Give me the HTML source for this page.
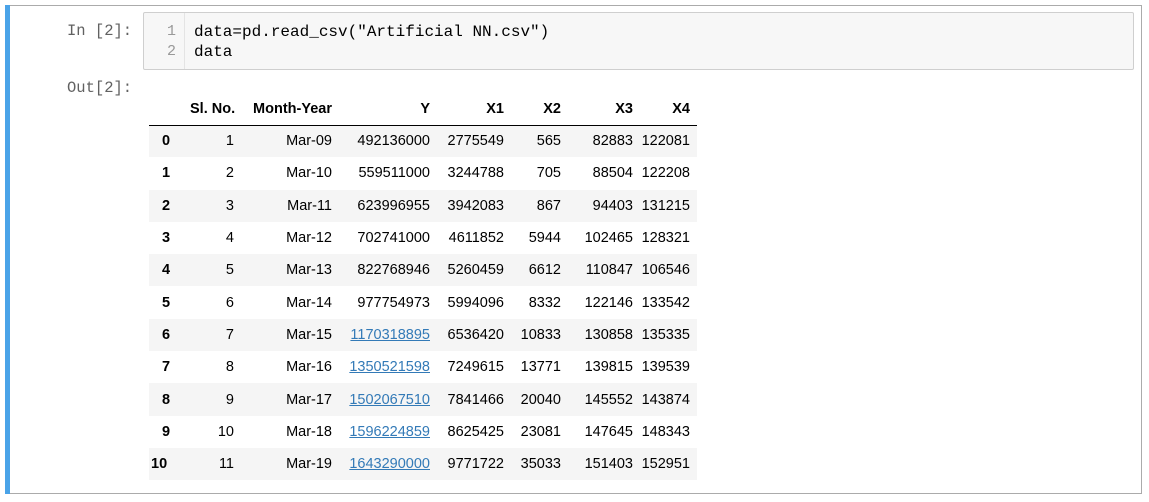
<!DOCTYPE html>
<html><head><style>
body{margin:0;background:#fff;width:1149px;height:502px;position:relative;overflow:hidden;font-family:"Liberation Sans",Arial,sans-serif}
.cell{position:absolute;left:5px;top:5px;width:1137px;height:489px;border:1px solid #ababab;border-left:none;box-sizing:border-box}
.bar{position:absolute;left:5px;top:5px;width:5px;height:489px;background:#4aa3e8}
.prompt{position:absolute;font-family:"Liberation Mono",monospace;font-size:15.5px;color:#616161}
.code{position:absolute;left:143px;top:12px;width:991px;height:58px;background:#f7f7f7;border:1px solid #cfcfcf;border-radius:2px;box-sizing:border-box}
.gut{position:absolute;left:0;top:0;width:41px;height:56px;border-right:1px solid #e4e4e4;font-family:"Liberation Mono",monospace;font-size:15px;color:#999;text-align:right;line-height:20px;padding-top:9px;box-sizing:border-box;padding-right:8px}
.src{position:absolute;left:50px;top:9px;font-family:"Liberation Mono",monospace;font-size:16px;line-height:20px;color:#000;white-space:pre}
table{position:absolute;left:149px;top:93px;border-collapse:collapse;font-size:14.5px;color:#000;table-layout:fixed;width:548px}
td,th{height:32.3px;padding:0 7px 0 0;text-align:right;box-sizing:border-box;white-space:nowrap;overflow:visible}
th{font-weight:bold}
thead th{border-bottom:1px solid #000;height:32px}
tbody tr:nth-child(odd){background:#f5f5f5}
tbody th{text-align:left;padding-left:13px}
a{color:#337ab7;text-decoration:underline}
</style></head><body>
<div class="cell"></div><div class="bar"></div>
<div class="prompt" style="left:67px;top:22px">In [2]:</div>
<div class="prompt" style="left:67px;top:79px">Out[2]:</div>
<div class="code"><div class="gut">1<br>2</div><div class="src">data=pd.read_csv("Artificial NN.csv")
data</div></div>
<table>
<colgroup><col style="width:41px"><col style="width:51px"><col style="width:98px"><col style="width:98px"><col style="width:74px"><col style="width:57px"><col style="width:72px"><col style="width:57px"></colgroup>
<thead><tr><th></th><th>Sl. No.</th><th>Month-Year</th><th>Y</th><th>X1</th><th>X2</th><th>X3</th><th>X4</th></tr></thead>
<tbody>
<tr><th>0</th><td>1</td><td>Mar-09</td><td>492136000</td><td>2775549</td><td>565</td><td>82883</td><td>122081</td></tr>
<tr><th>1</th><td>2</td><td>Mar-10</td><td>559511000</td><td>3244788</td><td>705</td><td>88504</td><td>122208</td></tr>
<tr><th>2</th><td>3</td><td>Mar-11</td><td>623996955</td><td>3942083</td><td>867</td><td>94403</td><td>131215</td></tr>
<tr><th>3</th><td>4</td><td>Mar-12</td><td>702741000</td><td>4611852</td><td>5944</td><td>102465</td><td>128321</td></tr>
<tr><th>4</th><td>5</td><td>Mar-13</td><td>822768946</td><td>5260459</td><td>6612</td><td>110847</td><td>106546</td></tr>
<tr><th>5</th><td>6</td><td>Mar-14</td><td>977754973</td><td>5994096</td><td>8332</td><td>122146</td><td>133542</td></tr>
<tr><th>6</th><td>7</td><td>Mar-15</td><td><a>1170318895</a></td><td>6536420</td><td>10833</td><td>130858</td><td>135335</td></tr>
<tr><th>7</th><td>8</td><td>Mar-16</td><td><a>1350521598</a></td><td>7249615</td><td>13771</td><td>139815</td><td>139539</td></tr>
<tr><th>8</th><td>9</td><td>Mar-17</td><td><a>1502067510</a></td><td>7841466</td><td>20040</td><td>145552</td><td>143874</td></tr>
<tr><th>9</th><td>10</td><td>Mar-18</td><td><a>1596224859</a></td><td>8625425</td><td>23081</td><td>147645</td><td>148343</td></tr>
<tr><th style="padding-left:2px">10</th><td>11</td><td>Mar-19</td><td><a>1643290000</a></td><td>9771722</td><td>35033</td><td>151403</td><td>152951</td></tr>
</tbody></table>
</body></html>
